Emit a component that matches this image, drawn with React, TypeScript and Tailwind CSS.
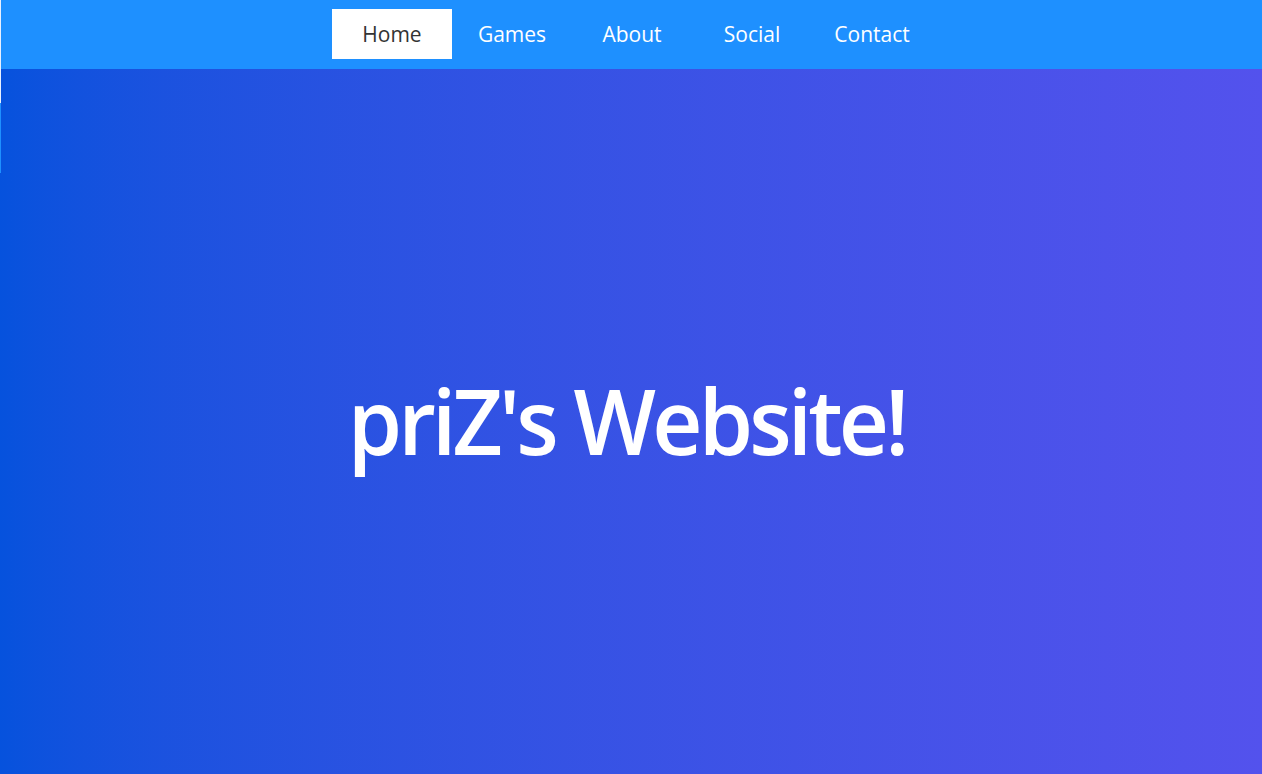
const links = ["Home", "Games", "About", "Social", "Contact"];

export default function App() {
  return (
    <div
      className="relative flex min-h-[774px] flex-col"
      style={{ fontFamily: "'Open Sans', 'Liberation Sans', sans-serif" }}
    >
      <nav className="flex h-[69px] items-start justify-center bg-[#1e90ff] pt-[9px]">
        <ul className="flex pl-[2px]">
          {links.map((link, i) => (
            <li key={link}>
              <a
                href="#"
                className={
                  i === 0
                    ? "flex h-[50px] w-[120px] items-center justify-center bg-white pt-[2px] text-[21px] text-[#333]"
                    : "flex h-[50px] w-[120px] items-center justify-center pt-[2px] text-[21px] text-white"
                }
              >
                {link}
              </a>
            </li>
          ))}
        </ul>
      </nav>

      <main className="flex flex-1 items-center justify-center bg-gradient-to-r from-[#0652dd] to-[#5352ed]">
        <h1 className="pb-[2px] pr-[10px] text-[90px] font-semibold tracking-[-4px] text-white scale-x-[0.97]">
          priZ's Website!
        </h1>
      </main>

      <div className="absolute left-0 top-0 h-[103px] w-px bg-[#e8f0ff]" />
      <div className="absolute left-0 top-[103px] h-[70px] w-px bg-[#1e90ff]" />
    </div>
  );
}
